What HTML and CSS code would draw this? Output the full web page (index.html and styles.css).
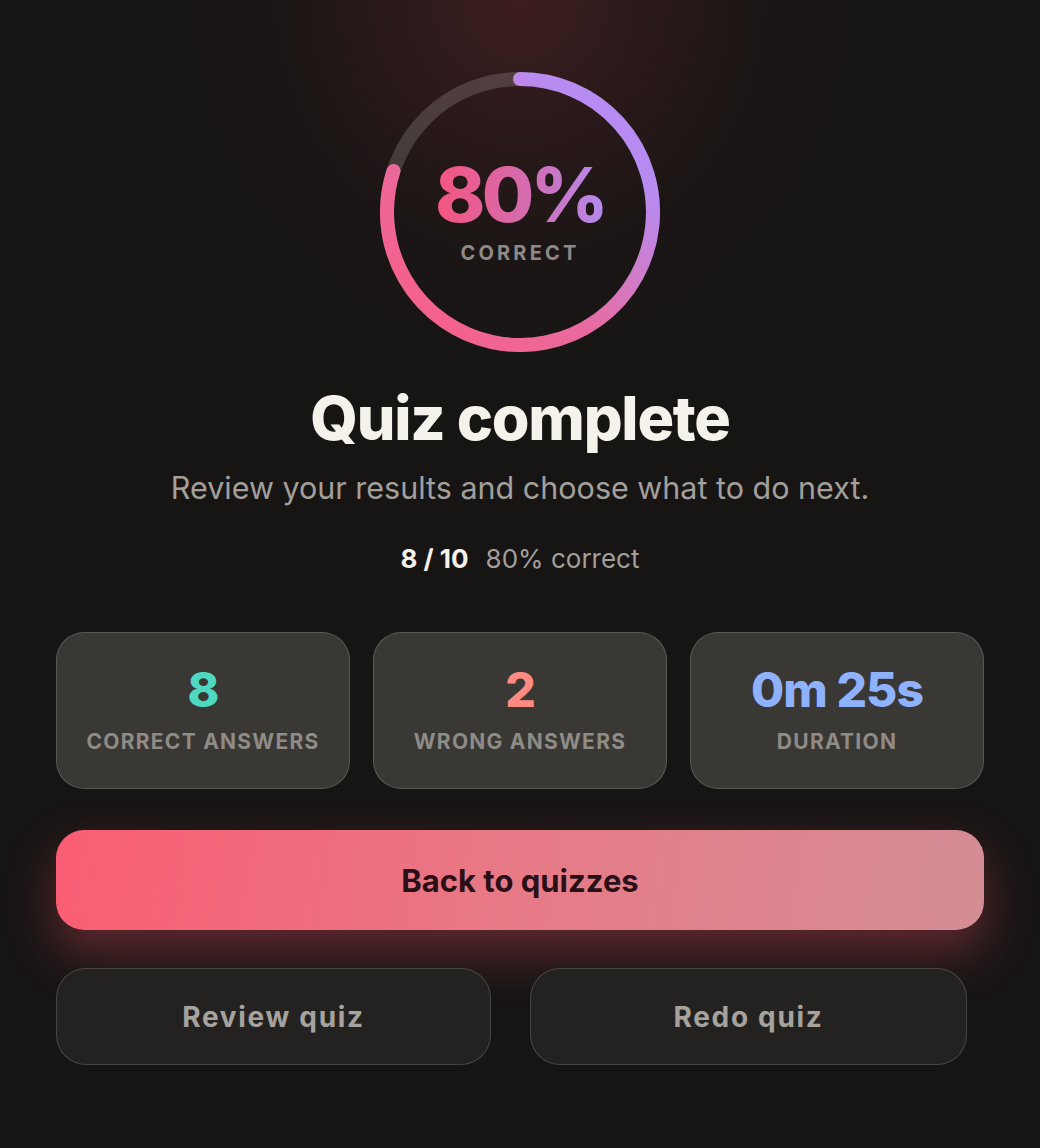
FILE: index.html
```html
<!DOCTYPE html>
<html lang="en">
<head>
<meta charset="utf-8">
<title>Quiz complete</title>
<link rel="stylesheet" href="styles.css">
</head>
<body>
<main class="page">
  <section class="score">
    <svg class="ring" viewBox="0 0 280 280" width="280" height="280" aria-hidden="true">
      <defs>
        <linearGradient id="ringGrad" x1="0" y1="1" x2="1" y2="0">
          <stop offset="0" stop-color="#fa5d84"/>
          <stop offset="0.4" stop-color="#e96a9e"/>
          <stop offset="0.78" stop-color="#b98bf0"/>
          <stop offset="1" stop-color="#b08cf5"/>
        </linearGradient>
      </defs>
      <circle class="ring-track" cx="140" cy="140" r="133"/>
      <path class="ring-bar" d="M140 7 A133 133 0 1 1 13.5 98.9" stroke="url(#ringGrad)"/>
    </svg>
    <div class="score-text">
      <div class="score-value">80%</div>
      <div class="score-label">CORRECT</div>
    </div>
  </section>

  <h1 class="title">Quiz complete</h1>
  <p class="subtitle">Review your results and choose what to do next.</p>
  <p class="summary"><strong>8 / 10</strong><span>80% correct</span></p>

  <section class="stats">
    <div class="stat">
      <div class="stat-value correct">8</div>
      <div class="stat-label">CORRECT ANSWERS</div>
    </div>
    <div class="stat">
      <div class="stat-value wrong">2</div>
      <div class="stat-label">WRONG ANSWERS</div>
    </div>
    <div class="stat">
      <div class="stat-value duration">0m 25s</div>
      <div class="stat-label">DURATION</div>
    </div>
  </section>

  <button class="btn-primary" type="button">Back to quizzes</button>

  <div class="secondary-row">
    <button class="btn-secondary" type="button">Review quiz</button>
    <button class="btn-secondary" type="button">Redo quiz</button>
  </div>
</main>
</body>
</html>
```

FILE: styles.css
```css
* { box-sizing: border-box; }

html, body {
  margin: 0;
  min-height: 100%;
}

body {
  background:
    radial-gradient(ellipse 440px 460px at 50% 0, rgba(84, 34, 38, 0.62), rgba(40, 24, 24, 0.22) 55%, transparent 80%),
    #171514;
  font-family: Inter, "Noto Sans", sans-serif;
  color: #f4f1ec;
  min-height: 1148px;
}

.page {
  display: flex;
  flex-direction: column;
  align-items: center;
  padding: 72px 56px 40px;
}

.score {
  display: grid;
  place-items: center;
  width: 280px;
  height: 280px;
}

.ring, .score-text {
  grid-area: 1 / 1;
}

.ring-track {
  fill: none;
  stroke: rgba(255, 255, 255, 0.16);
  stroke-width: 14;
}

.ring-bar {
  fill: none;
  stroke-width: 14;
  stroke-linecap: round;
}

.score-text {
  display: flex;
  flex-direction: column;
  align-items: center;
  margin-top: -4px;
}

.score-value {
  font-size: 76px;
  font-weight: 800;
  letter-spacing: -0.05em;
  line-height: 1;
  background: linear-gradient(90deg, #f4557f 0%, #d46cb0 55%, #b48af0 100%);
  -webkit-background-clip: text;
  background-clip: text;
  color: transparent;
}

.score-label {
  margin-top: 9px;
  font-size: 20px;
  font-weight: 700;
  letter-spacing: 0.16em;
  color: #8e8886;
}

.title {
  margin: 33px 0 0;
  font-size: 61px;
  font-weight: 800;
  letter-spacing: -0.02em;
  line-height: 1.1;
  color: #f5f2ec;
}

.subtitle {
  margin: 17px 0 0;
  font-size: 30.5px;
  font-weight: 400;
  color: #a39f9b;
}

.summary {
  margin: 37px 0 0;
  font-size: 26px;
  display: flex;
  gap: 17px;
  color: #a39f9b;
}

.summary strong {
  color: #f5f2ec;
  font-weight: 700;
}

.stats {
  margin-top: 58px;
  width: 100%;
  display: grid;
  grid-template-columns: repeat(3, 1fr);
  gap: 23px;
}

.stat {
  height: 157px;
  border-radius: 28px;
  background: #3a3835;
  border: 1.5px solid rgba(255, 255, 255, 0.16);
  display: flex;
  flex-direction: column;
  align-items: center;
  justify-content: center;
  gap: 13px;
  padding-bottom: 3px;
}

.stat-value {
  font-size: 48px;
  font-weight: 800;
  letter-spacing: -0.02em;
  line-height: 1.1;
}

.stat-value.correct { color: #4fd8c2; }
.stat-value.wrong { color: #ff8a82; }
.stat-value.duration { color: #8fb2ff; }

.stat-label {
  font-size: 21px;
  font-weight: 700;
  letter-spacing: 0.06em;
  line-height: 1.2;
  color: #8f8b86;
}

.btn-primary {
  margin-top: 41px;
  width: 100%;
  height: 100px;
  border: none;
  border-radius: 28px;
  background: linear-gradient(100deg, #fa5d73 0%, #e77a86 50%, #d48d95 100%);
  box-shadow: 0 22px 48px rgba(240, 80, 100, 0.34);
  font-family: inherit;
  font-size: 31px;
  font-weight: 700;
  color: #2a1016;
  cursor: pointer;
}

.secondary-row {
  margin-top: 38px;
  align-self: flex-start;
  width: 911px;
  display: grid;
  grid-template-columns: 435px 437px;
  gap: 39px;
}

.btn-secondary {
  height: 97px;
  border-radius: 30px;
  background: #242221;
  border: 1.5px solid rgba(255, 255, 255, 0.16);
  font-family: inherit;
  font-size: 28px;
  font-weight: 700;
  letter-spacing: 0.06em;
  color: #a6a29e;
  cursor: pointer;
}
```
